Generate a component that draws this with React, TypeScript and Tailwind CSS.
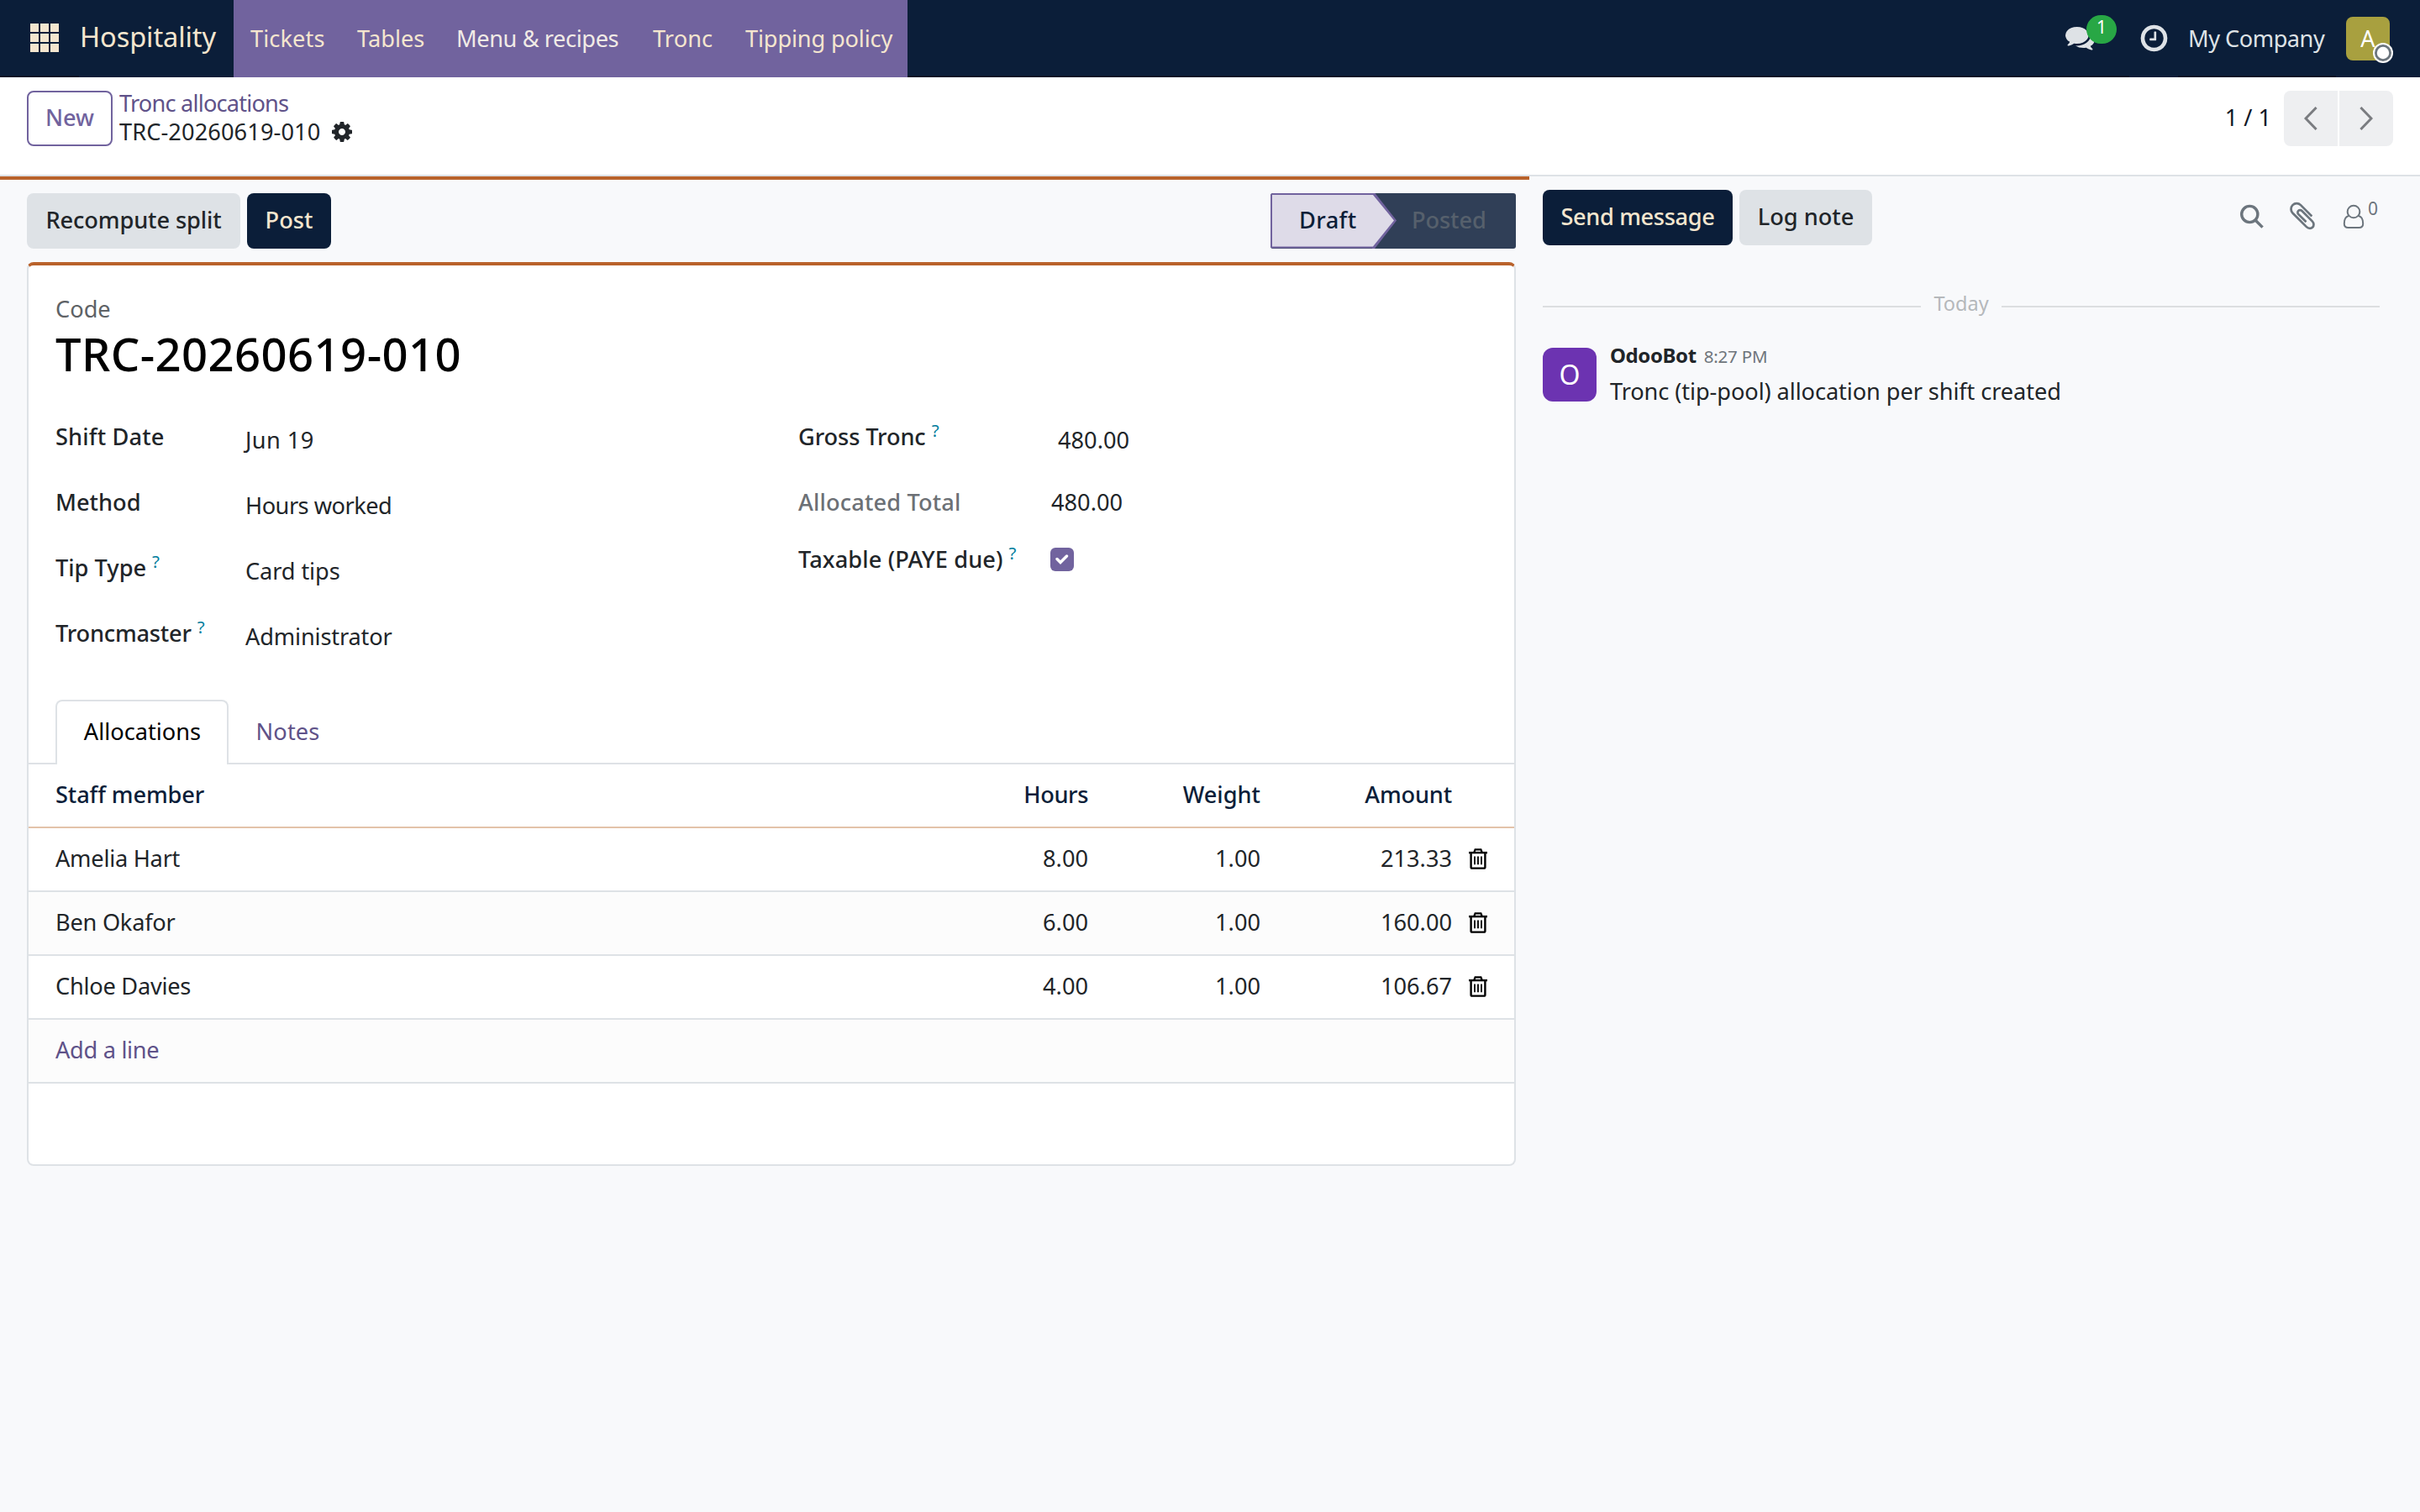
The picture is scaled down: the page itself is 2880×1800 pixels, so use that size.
import React, { useState } from "react";
import clsx from "clsx";

const menu = [
  { label: "Tickets", cls: "w-[127px] text-[#f5e6cf] tracking-[0.1px]" },
  { label: "Tables", cls: "w-[118px] text-[#f5e6cf]" },
  { label: "Menu & recipes", cls: "w-[234px] text-[#f1ebe6] tracking-[-0.4px]" },
  { label: "Tronc", cls: "w-[110px] text-[#f5e6cf] tracking-[0.1px]" },
  { label: "Tipping policy", cls: "w-[193px] text-[#f5e6cf] tracking-[-0.15px]" },
];

const lines = [
  { name: "Amelia Hart", hours: "8.00", weight: "1.00", amount: "213.33" },
  { name: "Ben Okafor", hours: "6.00", weight: "1.00", amount: "160.00" },
  { name: "Chloe Davies", hours: "4.00", weight: "1.00", amount: "106.67" },
];

const fa = {
  comments:
    "M1408 768q0 139-94 257t-256.5 186.5-353.5 68.5q-86 0-176-16-124 88-278 128-36 9-86 16h-3q-11 0-20.5-8t-11.5-21q-1-3-1-6.5t.5-6.5 2-6l2.5-5 3.5-5.5 4-5 4.5-5 4-4.5q5-6 23-25t26-29.5 22.5-29 25-38.5 20.5-44q-124-72-195-177t-71-224q0-139 94-257t256.5-186.5 353.5-68.5 353.5 68.5 256.5 186.5 94 257zm384 256q0 120-71 224.5t-195 176.5q10 24 20.5 44t25 38.5 22.5 29 26 29.5 23 25q1 1 4 4.5t4.5 5 4 5 3.5 5.5l2.5 5 2 6 .5 6.5-1 6.5q-3 14-13 22t-22 7q-50-7-86-16-154-40-278-128-90 16-176 16-271 0-472-132 58 4 88 4 161 0 309-45t264-129q125-92 192-212t67-254q0-77-23-152 129 71 204 178t75 230z",
  clock:
    "M1024 544v448q0 14-9 23t-23 9h-320q-14 0-23-9t-9-23v-64q0-14 9-23t23-9h224v-352q0-14 9-23t23-9h64q14 0 23 9t9 23zm416 352q0-148-73-273t-198-198-273-73-273 73-198 198-73 273 73 273 198 198 273 73 273-73 198-198 73-273zm224 0q0 209-103 385.5t-279.5 279.5-385.5 103-385.5-103-279.5-279.5-103-385.5 103-385.5 279.5-279.5 385.5-103 385.5 103 279.5 279.5 103 385.5z",
  cog: "M1152 896q0-106-75-181t-181-75-181 75-75 181 75 181 181 75 181-75 75-181zm512-109v222q0 12-8 23t-20 13l-185 28q-19 54-39 91 35 50 107 138 10 12 10 25t-9 23q-27 37-99 108t-94 71q-12 0-26-9l-138-108q-44 23-91 38-16 136-29 186-7 28-36 28h-222q-14 0-24.5-8.5t-11.5-21.5l-28-184q-49-16-90-37l-141 107q-10 9-25 9-14 0-25-11-126-114-165-168-7-10-7-23 0-12 8-23 15-21 51-66.5t54-70.5q-27-50-41-99l-183-27q-13-2-21-12.5t-8-23.5v-222q0-12 8-23t19-13l186-28q14-46 39-92-40-57-107-138-10-12-10-24 0-10 9-23 26-36 98.5-107.5t94.5-71.5q13 0 26 10l138 107q44-23 91-38 16-136 29-186 7-28 36-28h222q14 0 24.5 8.5t11.5 21.5l28 184q49 16 90 37l142-107q9-9 24-9 13 0 25 10 129 119 165 170 7 8 7 22 0 12-8 23-15 21-51 66.5t-54 70.5q26 50 41 98l183 28q13 2 21 12.5t8 23.5z",
  paperclip:
    "M1596 1385q0 117-79 196t-196 79q-135 0-235-100l-777-776q-113-115-113-271 0-159 110-270t269-111q158 0 273 113l605 606q10 10 10 22 0 16-30.5 46.5t-46.5 30.5q-13 0-23-10l-606-607q-79-77-181-77-106 0-179 75t-73 181q0 105 76 181l776 777q63 63 145 63 64 0 106-42t42-106q0-82-63-145l-581-581q-26-24-60-24-29 0-48 19t-19 48q0 32 25 59l410 410q10 10 10 22 0 16-31 47t-47 31q-12 0-22-10l-410-410q-63-61-63-149 0-82 57-139t139-57q88 0 149 63l581 581q100 98 100 235z",
};

function FaIcon({ d, className }: { d: string; className: string }) {
  return (
    <svg viewBox="0 0 1792 1792" className={clsx("shrink-0 fill-current", className)}>
      <path d={d} />
    </svg>
  );
}

function Trash() {
  return (
    <svg viewBox="0 0 22 25" className="w-[22px] h-[25px]" fill="none" stroke="#000">
      <path d="M0 5.1H22" strokeWidth="2.4" />
      <path d="M6.2 5L7.6 1.3H14.4L15.8 5" strokeWidth="2.2" />
      <path d="M2.6 5V22.2Q2.6 23.6 4 23.6H18Q19.4 23.6 19.4 22.2V5" strokeWidth="2.4" />
      <path d="M7 9.6V19.2M11 9.6V19.2M15 9.6V19.2" strokeWidth="1.8" />
    </svg>
  );
}

function Navbar() {
  return (
    <header className="flex h-[92px] bg-[#0b1e39] border-b-2 border-[#051226]">
      <div className="flex w-[94px] items-center pl-[36px] pb-[1px]">
        <svg viewBox="0 0 34 34" className="w-[34px] h-[34px]" fill="#f5e6cf">
          {[0, 12, 24].map((y) =>
            [0, 12, 24].map((x) => <rect key={x + "-" + y} x={x} y={y} width="10" height="10" />)
          )}
        </svg>
      </div>
      <div className="flex w-[184px] h-[92px] items-center bg-[#0b1e39] pb-[5px] pl-px">
        <p className="text-[32.6px] text-[#f5e6cf] whitespace-nowrap tracking-[-0.1px]">Hospitality</p>
      </div>
      <nav className="flex h-[92px] w-[802px] items-center bg-[#71639e] pl-[20px]">
        {menu.map((m) => (
          <a key={m.label} className={clsx("whitespace-nowrap shrink-0", m.cls)}>
            {m.label}
          </a>
        ))}
      </nav>
      <div className="flex ml-auto">
        <div className="relative flex w-[76px] h-[88px] items-center text-[#dee2e6]">
          <FaIcon d={fa.comments} className="w-[35px] h-[35px]" />
          <span className="absolute left-[25px] top-[18px] w-[36px] h-[34px] rounded-full bg-[#28a745] text-center text-[21px] leading-[29px] text-white">
            1
          </span>
        </div>
        <div className="flex w-[58px] h-[92px] items-center justify-center bg-[#0b1e39] pb-[2px] text-[#dee2e6]">
          <FaIcon d={fa.clock} className="w-[37px] h-[37px]" />
        </div>
        <div className="flex w-[188px] h-[92px] items-center pl-[12px]">
          <p className="text-[#dee2e6] whitespace-nowrap tracking-[-0.5px]">My Company</p>
        </div>
        <div className="flex w-[100px] h-[92px] items-center bg-[#0b1e39] pl-[12px]">
          <div className="relative w-[52px] h-[52px] rounded-[8px] bg-[#a8a03f] text-center text-white text-[27px] leading-[52px]">
            A
            <svg viewBox="0 0 24 24" className="absolute left-[32px] top-[31px] w-[24px] h-[24px]">
              <circle cx="12" cy="12" r="12" fill="#fff" />
              <circle cx="12" cy="12" r="8.6" fill="#fff" stroke="#6c757d" strokeWidth="2.8" />
            </svg>
          </div>
        </div>
      </div>
    </header>
  );
}

function ControlPanel() {
  return (
    <div className="flex h-[118px] bg-white border-b-2 border-[#dee2e6] pt-[16px] pl-[32px] pr-[32px]">
      <button className="w-[102px] h-[66px] rounded-[8px] border-2 border-[#71639e] text-[#71639e] font-medium pb-[3px]">
        New
      </button>
      <div className="ml-[8px] -mt-[3px]">
        <p className="text-[#5f5289] h-[34px] leading-[36px] whitespace-nowrap tracking-[-0.8px]">Tronc allocations</p>
        <div className="flex items-center h-[34px] text-[#212529]">
          <p className="leading-[34px] pt-px whitespace-nowrap tracking-[0.1px]">TRC-20260619-010</p>
          <FaIcon d={fa.cog} className="w-[28px] h-[28px] ml-[12px] mt-px" />
        </div>
      </div>
      <div className="flex ml-auto gap-[2px] text-[#7a7c80]">
        <p className="leading-[63px] text-[#111827] mr-[13px] whitespace-nowrap">1 / 1</p>
        <button className="flex w-[64px] h-[66px] items-center justify-center rounded-l-[8px] bg-[#eeeff1]">
          <svg viewBox="0 0 16 28" className="w-[16px] h-[28px]" fill="none" stroke="currentColor" strokeWidth="3">
            <path d="M14.6 1L2 14L14.6 27" />
          </svg>
        </button>
        <button className="flex w-[64px] h-[66px] items-center justify-center rounded-r-[8px] bg-[#eeeff1]">
          <svg viewBox="0 0 16 28" className="w-[16px] h-[28px]" fill="none" stroke="currentColor" strokeWidth="3">
            <path d="M1.4 1L14 14L1.4 27" />
          </svg>
        </button>
      </div>
    </div>
  );
}

function StatusBar() {
  return (
    <div className="flex h-[98px] pt-[16px] pl-[32px] pr-[16px]">
      <button className="w-[254px] h-[66px] rounded-[8px] bg-[#dee2e6] text-[#212529] font-medium whitespace-nowrap pb-[3px] tracking-[-0.1px]">
        Recompute split
      </button>
      <button className="w-[100px] h-[66px] ml-[8px] rounded-[8px] bg-[#0b1e39] text-[#f5e6cf] font-medium pb-[3px]">
        Post
      </button>
      <div className="relative flex w-[292px] h-[66px] ml-auto rounded-[3px] bg-[#303f57] font-medium overflow-hidden">
        <svg viewBox="0 0 152 66" className="absolute left-0 top-0 w-[152px] h-[66px]">
          <path d="M121 0H124.5L150 32.5L124 66H121Z" fill="#71639e" />
          <path d="M1 1H122.5L148.3 32.5L122.5 64.4H1Z" fill="#dedbe8" stroke="#71639e" strokeWidth="2" />
        </svg>
        <p className="relative w-[168px] pl-[34px] leading-[64px] text-[#0b1e39] tracking-[0.4px]">Draft</p>
        <p className="leading-[64px] text-[#56606c] tracking-[-0.1px]">Posted</p>
      </div>
    </div>
  );
}

type FieldProps = {
  label: string;
  help?: boolean;
  labelCls?: string;
  rowCls: string;
  children: React.ReactNode;
};

function Field({ label, help, labelCls, rowCls, children }: FieldProps) {
  return (
    <div className={clsx("flex items-start leading-[42px] whitespace-nowrap", rowCls)}>
      <div className="flex w-[var(--label)] shrink-0">
        <p className={clsx("font-medium", labelCls ?? "text-[#212529]")}>{label}</p>
        {help && <sup className="ml-[7px] text-[20.5px] leading-[26px] top-0 text-[#017e9e]">?</sup>}
      </div>
      {children}
    </div>
  );
}

function Sheet() {
  const [tab, setTab] = useState("Allocations");
  const [taxable, setTaxable] = useState(true);
  return (
    <div className="ml-[32px] w-[1772px] h-[1076px] bg-white rounded-[8px] border-2 border-t-4 border-[#dee2e6] border-t-[#b9622b] text-[#212529]">
      <div className="px-[32px] pt-[34px]">
        <p className="h-[36px] leading-[36px] text-[#5e6266]">Code</p>
        <h1 className="mt-[3px] h-[64px] leading-[64px] text-[54.4px] font-medium text-black tracking-[0.4px]">
          TRC-20260619-010
        </h1>
      </div>

      <div className="flex pl-[32px] mt-[46px] h-[334px]">
        <div className="w-[884px] [--label:226px]">
          <Field label="Shift Date" labelCls="text-[#212529] tracking-[0.15px]" rowCls="h-[78px]">
            <p className="pt-[4px] tracking-[0.4px]">Jun 19</p>
          </Field>
          <Field label="Method" rowCls="h-[78px]">
            <p className="pt-[4px] tracking-[-0.5px]">Hours worked</p>
          </Field>
          <Field label="Tip Type" help rowCls="h-[78px]">
            <p className="pt-[4px] tracking-[-0.1px]">Card tips</p>
          </Field>
          <Field label="Troncmaster" labelCls="text-[#212529] tracking-[-0.2px]" help rowCls="h-[78px]">
            <p className="pt-[4px] tracking-[-0.15px]">Administrator</p>
          </Field>
        </div>
        <div className="[--label:300px]">
          <Field label="Gross Tronc" labelCls="text-[#212529] tracking-[-0.1px]" help rowCls="h-[78px]">
            <p className="pt-[4px] pl-[9px]">480.00</p>
          </Field>
          <Field label="Allocated Total" labelCls="text-[#6c7075] tracking-[0.15px]" rowCls="h-[68px]">
            <p className="pl-px">480.00</p>
          </Field>
          <Field label="Taxable (PAYE due)" labelCls="text-[#212529] tracking-[0.1px]" help rowCls="h-[78px]">
            <button
              className="flex w-[28px] h-[28px] mt-[7px] items-center justify-center rounded-[6px] bg-[#71639e]"
              onClick={() => setTaxable(!taxable)}
            >
              {taxable && (
                <svg viewBox="0 0 16 12" className="w-[16px] h-[12px]" fill="none" stroke="#fff" strokeWidth="3.4">
                  <path d="M2 5.5L6 9.5L13.5 2" strokeLinecap="round" />
                </svg>
              )}
            </button>
          </Field>
        </div>
      </div>

      <div className="flex h-[77px]">
        <div className="w-[32px] border-b-2 border-[#dee2e6]" />
        {["Allocations", "Notes"].map((t) => (
          <button
            key={t}
            onClick={() => setTab(t)}
            className={clsx(
              "h-[77px]",
              t === "Allocations" ? "w-[206px] pl-px" : "w-[140px] pl-px tracking-[0.1px]",
              t === tab
                ? "rounded-t-[8px] border-2 border-b-0 border-[#dee2e6] pb-[3px] text-black"
                : "border-b-2 border-[#dee2e6] pt-px text-[#5f5289]"
            )}
          >
            {t}
          </button>
        ))}
        <div className="flex-1 border-b-2 border-[#dee2e6]" />
      </div>

      <div className="text-right">
        <div className="grid grid-cols-[1061px_200px_205px_228px_74px] h-[76px] items-center border-b-2 border-[#e3c3aa] pb-[2px] font-medium text-[#0b1e39]">
          <p className="pl-[32px] text-left tracking-[-0.1px]">Staff member</p>
          <p className="tracking-[-0.4px]">Hours</p>
          <p>Weight</p>
          <p className="tracking-[-0.15px]">Amount</p>
        </div>
        {lines.map((l) => (
          <div
            key={l.name}
            className="grid grid-cols-[1061px_200px_205px_228px_74px] h-[76px] items-center border-b-2 border-[#dee2e6] pb-[2px] even:bg-white odd:bg-[#fcfcfc]"
          >
            <p className="pl-[32px] text-left tracking-[-0.25px]">{l.name}</p>
            <p>{l.hours}</p>
            <p>{l.weight}</p>
            <p>{l.amount}</p>
            <div className="pl-[20px]">
              <Trash />
            </div>
          </div>
        ))}
        <div className="flex h-[76px] items-center border-b-2 border-[#dee2e6] bg-[#fcfcfc] pl-[32px] pb-[2px] text-[#5f5289]">
          <a className="tracking-[-0.3px]">Add a line</a>
        </div>
      </div>
    </div>
  );
}

function Chatter() {
  return (
    <aside className="w-[1060px] pt-[16px] pl-[16px]">
      <div className="flex">
        <button className="w-[226px] h-[66px] rounded-[8px] bg-[#0b1e39] text-[#f5e6cf] font-medium whitespace-nowrap pb-[3px] tracking-[-0.35px]">
          Send message
        </button>
        <button className="w-[158px] h-[66px] ml-[8px] rounded-[8px] bg-[#dee2e6] text-[#212529] font-medium whitespace-nowrap pb-[3px]">
          Log note
        </button>
        <div className="flex ml-auto mr-[50px] pt-[14px] text-[#6c757d]">
          <svg viewBox="0 0 30 30" className="w-[30px] h-[30px] mt-[3px]" fill="none" stroke="currentColor" strokeWidth="3.4">
            <circle cx="12.3" cy="12" r="9.6" />
            <path d="M19 19L27.6 27.6" />
          </svg>
          <FaIcon d={fa.paperclip} className="w-[38px] h-[38px] ml-[26px] -mt-[2px]" />
          <svg viewBox="0 0 26 30" className="w-[26px] h-[30px] ml-[29px] mt-[3px]" fill="none" stroke="currentColor" strokeWidth="2">
            <circle cx="13" cy="9" r="7.3" />
            <path d="M7 14C3 15 1.8 19 1.8 23.2Q1.8 28 6.5 28H19.5Q24.2 28 24.2 23.2C24.2 19 23 15 19 14" />
          </svg>
          <span className="ml-[4px] -mt-[3px] text-[21px] leading-[22px]">0</span>
        </div>
      </div>

      <div className="flex items-center mt-[56px] h-[34px] w-[996px] gap-[15px]">
        <div className="flex-1 h-[2px] bg-[#dcdee0]" />
        <p className="text-[23.5px] leading-[34px] -mt-[8px] text-[#b5b8bb]">Today</p>
        <div className="flex-1 h-[2px] bg-[#dcdee0]" />
      </div>

      <div className="flex mt-[32px]">
        <div className="w-[64px] h-[64px] rounded-[12px] bg-[#6c33b1] text-center text-white text-[32px] leading-[63px]">O</div>
        <div className="ml-[16px] whitespace-nowrap">
          <div className="flex items-baseline h-[26px] leading-[18px]">
            <p className="text-[24px] font-bold text-[#212529] tracking-[-0.4px]">OdooBot</p>
            <p className="ml-[9px] text-[20.5px] text-[#6f757b] tracking-[-0.2px]">8:27 PM</p>
          </div>
          <p className="leading-[42px] mt-[5px] text-[#212529] tracking-[-0.09px]">
            Tronc (tip-pool) allocation per shift created
          </p>
        </div>
      </div>
    </aside>
  );
}

export default function App() {
  return (
    <div className="w-[2880px] h-[1800px] overflow-hidden bg-[#f8f9fb] text-[27.2px] leading-[42px] font-['Noto_Sans','Open_Sans',sans-serif]">
      <Navbar />
      <ControlPanel />
      <div className="flex">
        <main className="w-[1820px] border-t-4 border-[#b9622b]">
          <StatusBar />
          <Sheet />
        </main>
        <Chatter />
      </div>
    </div>
  );
}
